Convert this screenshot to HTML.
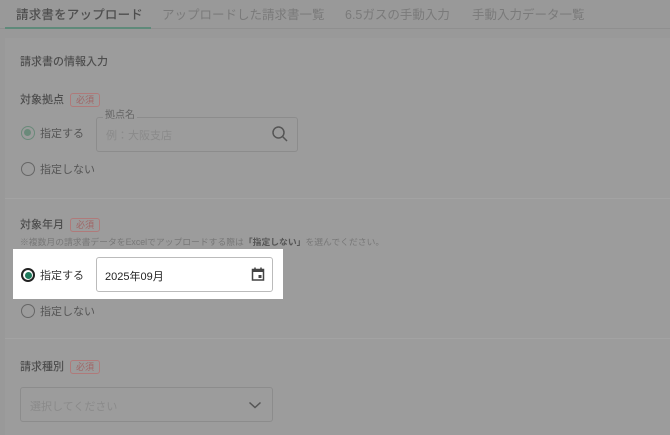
<!DOCTYPE html>
<html><head><meta charset="utf-8"><style>
*{margin:0;padding:0;box-sizing:border-box}
body{width:670px;height:435px;overflow:hidden;background:#999;font-family:"Liberation Sans","Noto Sans CJK JP",sans-serif;position:relative;color:#4a4a4a}
.a{position:absolute;white-space:nowrap}
.tab{top:5px;font-size:12.5px;color:#7a7a7a;line-height:20px}
.card{position:absolute;left:5px;top:38px;right:0;bottom:0;background:#9c9c9c}
.lbl{font-size:11px;color:#4e4e4e;font-weight:500;line-height:16px}
.badge{font-size:9px;color:#a06565;border:1px solid #b07a7a;border-radius:3px;width:30px;height:14px;line-height:12px;text-align:center}
.radio{width:14px;height:14px;border:1.5px solid #666;border-radius:50%}
.rt{font-size:11px;color:#555;line-height:14px}
.sep{left:5px;right:0;height:1px;background:#a3a3a3}
</style></head><body>
<div class="a" style="left:0;right:0;top:28px;height:1px;background:#8f8f8f"></div>
<div class="a tab" style="left:16px;color:#4e4e4e;font-weight:500;letter-spacing:0.2px">請求書をアップロード</div>
<div class="a tab" style="left:162px">アップロードした請求書一覧</div>
<div class="a tab" style="left:345px">6.5ガスの手動入力</div>
<div class="a tab" style="left:472px">手動入力データ一覧</div>
<div class="a" style="left:5px;top:27px;width:146px;height:2px;background:#5f8a7a"></div>
<div class="card"></div>
<div class="a lbl" style="left:20px;top:54px">請求書の情報入力</div>

<div class="a lbl" style="left:20px;top:92px">対象拠点</div>
<div class="a badge" style="left:70px;top:93px">必須</div>
<div class="a radio" style="left:21px;top:126px;border-color:#6a8a7a"><div style="position:absolute;left:2px;top:2px;width:7px;height:7px;border-radius:50%;background:#6a8a7a"></div></div>
<div class="a rt" style="left:40px;top:127px">指定する</div>
<div class="a" style="left:96px;top:117px;width:202px;height:35px;border:1px solid #8c8c8c;border-radius:3px"></div>
<div class="a" style="left:103px;top:110px;font-size:10px;color:#666;background:#9c9c9c;padding:0 2px;line-height:12px">拠点名</div>
<div class="a" style="left:106px;top:127px;font-size:11px;color:#8a8a8a">例：大阪支店</div>
<svg class="a" style="left:271px;top:125px" width="18" height="18" viewBox="0 0 18 18"><circle cx="7.5" cy="7.5" r="5.5" fill="none" stroke="#555" stroke-width="1.5"/><line x1="11.5" y1="11.5" x2="16" y2="16" stroke="#555" stroke-width="1.5"/></svg>
<div class="a radio" style="left:21px;top:162px"></div>
<div class="a rt" style="left:40px;top:163px">指定しない</div>
<div class="a sep" style="top:198px"></div>

<div class="a lbl" style="left:20px;top:217px">対象年月</div>
<div class="a badge" style="left:70px;top:218px">必須</div>
<div class="a" style="left:20px;top:235px;font-size:8.8px;color:#777">※複数月の請求書データをExcelでアップロードする際は<b style="color:#555">「指定しない」</b>を選んでください。</div>
<div class="a" style="left:13px;top:249px;width:270px;height:50px;background:#fff"></div>
<div class="a radio" style="left:21px;top:268px;border-color:#222;border-width:2px"><div style="position:absolute;left:1.5px;top:1.5px;width:7px;height:7px;border-radius:50%;background:#1f7a5c"></div></div>
<div class="a rt" style="left:40px;top:269px;color:#333">指定する</div>
<div class="a" style="left:96px;top:257px;width:177px;height:35px;border:1px solid #bbb;border-radius:3px"></div>
<div class="a" style="left:105px;top:268px;font-size:11px;color:#222">2025年09月</div>
<svg class="a" style="left:251px;top:267px" width="14" height="14" viewBox="0 0 14 14"><rect x="1.5" y="2.5" width="11" height="10.5" fill="none" stroke="#444" stroke-width="1.5"/><rect x="1.5" y="2.5" width="11" height="2.5" fill="#444"/><line x1="4" y1="0.5" x2="4" y2="3" stroke="#444" stroke-width="1.5"/><line x1="10" y1="0.5" x2="10" y2="3" stroke="#444" stroke-width="1.5"/><rect x="7.5" y="8" width="3" height="3" fill="#444"/></svg>
<div class="a radio" style="left:21px;top:304px"></div>
<div class="a rt" style="left:40px;top:305px">指定しない</div>
<div class="a sep" style="top:338px"></div>

<div class="a lbl" style="left:20px;top:359px">請求種別</div>
<div class="a badge" style="left:70px;top:360px">必須</div>
<div class="a" style="left:20px;top:387px;width:253px;height:35px;border:1px solid #8c8c8c;border-radius:3px"></div>
<div class="a" style="left:30px;top:398px;font-size:11px;color:#8a8a8a">選択してください</div>
<svg class="a" style="left:248px;top:400px" width="14" height="10" viewBox="0 0 14 10"><polyline points="1.5,2.5 7,7.5 12.5,2.5" fill="none" stroke="#555" stroke-width="1.5"/></svg>
</body></html>
